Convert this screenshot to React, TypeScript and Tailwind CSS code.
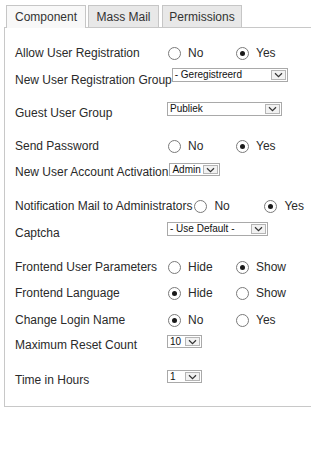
import React from "react";

const font = { fontFamily: '"Liberation Sans", Arial, sans-serif' };

function Chevron() {
  return (
    <svg width="9" height="6" viewBox="0 0 9 6">
      <path d="M1 1.2 L4.5 4.6 L8 1.2" fill="none" stroke="#333" strokeWidth="1.2" />
    </svg>
  );
}

function Select({ value, w, h = 14 }: { value: string; w: number; h?: number }) {
  return (
    <div
      className="flex shrink-0 border border-[#a9a9a9] bg-white"
      style={{ width: w, height: h }}
    >
      <span className="flex-1 overflow-hidden whitespace-nowrap pl-[2px] text-[10px] leading-[11px] text-[#111]">
        {value}
      </span>
      <span className="my-[1px] mr-[1px] flex w-[15px] shrink-0 items-center justify-center border border-[#b5b5b5] bg-[#f2f2f2]">
        <Chevron />
      </span>
    </div>
  );
}

function Radio({ checked }: { checked: boolean }) {
  return (
    <span className="flex h-[13px] w-[13px] shrink-0 items-center justify-center rounded-full border border-[#7a7a7a] bg-white">
      {checked && <span className="h-[5px] w-[5px] rounded-full bg-[#1a1a1a]" />}
    </span>
  );
}

function RadioRow({
  label,
  opts,
  sel,
  h,
  w = 68,
  gap = 1,
}: {
  label: string;
  opts: [string, string];
  sel: number;
  h: number;
  w?: number;
  gap?: number;
}) {
  return (
    <div className="flex items-start" style={{ height: h }}>
      <div className="mt-[1px] flex h-[14px] items-center">
        <span className="min-w-[152px] whitespace-nowrap text-[12px] leading-[14px] text-[#2a2a2a]">
          {label}
        </span>
        {opts.map((o, i) => (
          <span key={o} className="flex items-center" style={{ width: w }}>
            <span style={{ marginLeft: gap }}>
              <Radio checked={sel === i} />
            </span>
            <span className="ml-[7px] text-[12px] leading-[14px] text-[#2a2a2a]">{o}</span>
          </span>
        ))}
      </div>
    </div>
  );
}

function SelectRow({
  label,
  value,
  w,
  h,
  labelMt,
  selH = 14,
  ml = 0,
}: {
  label: string;
  value: string;
  w: number;
  h: number;
  labelMt: number;
  selH?: number;
  ml?: number;
}) {
  return (
    <div className="flex items-start" style={{ height: h }}>
      <span
        className="min-w-[152px] whitespace-nowrap text-[12px] leading-[14px] text-[#2a2a2a]"
        style={{ marginTop: labelMt + 1 }}
      >
        {label}
      </span>
      <span style={{ marginLeft: ml }}>
        <Select value={value} w={w} h={selH} />
      </span>
    </div>
  );
}

export default function App() {
  return (
    <div className="h-[449px] w-[311px] overflow-hidden bg-white" style={font}>
      <div className="relative z-10 flex pl-[6px] pt-[5px] -mb-px">
        <div className="relative flex h-[23px] w-[80px] items-center justify-center border border-b-0 border-[#c6c6c6] bg-[#f8f8f8] text-[12px] text-[#333]">
          Component
        </div>
        <div className="ml-[2px] flex h-[22px] w-[71px] items-center justify-center border border-b-0 border-[#c6c6c6] bg-[#e8e8e8] text-[12px] text-[#333]">
          Mass Mail
        </div>
        <div className="ml-[3px] flex h-[22px] w-[80px] items-center justify-center border border-b-0 border-[#c6c6c6] bg-[#e8e8e8] text-[12px] text-[#333]">
          Permissions
        </div>
      </div>
      <div className="ml-[4px] border border-r-0 border-[#c8c8c8] pb-[20px] pl-[10px] pt-[17px]">
        <RadioRow label="Allow User Registration" opts={["No", "Yes"]} sel={1} h={23} />
        <SelectRow label="New User Registration Group" value="- Geregistreerd" w={116} h={34} labelMt={4} />
        <SelectRow label="Guest User Group" value="Publiek" w={115} h={36} labelMt={3} />
        <RadioRow label="Send Password" opts={["No", "Yes"]} sel={1} h={25} />
        <SelectRow label="New User Account Activation" value="Admin" w={51} h={35} labelMt={1} selH={13} ml={1} />
        <RadioRow label="Notification Mail to Administrators" opts={["No", "Yes"]} sel={1} h={24} w={70} gap={2} />
        <SelectRow label="Captcha" value="- Use Default -" w={101} h={37} labelMt={3} />
        <RadioRow label="Frontend User Parameters" opts={["Hide", "Show"]} sel={1} h={26} />
        <RadioRow label="Frontend Language" opts={["Hide", "Show"]} sel={0} h={27} />
        <RadioRow label="Change Login Name" opts={["No", "Yes"]} sel={0} h={23} />
        <SelectRow label="Maximum Reset Count" value="10" w={35} h={35} labelMt={2} selH={13} />
        <SelectRow label="Time in Hours" value="1" w={35} h={16} labelMt={2} selH={13} />
      </div>
    </div>
  );
}
